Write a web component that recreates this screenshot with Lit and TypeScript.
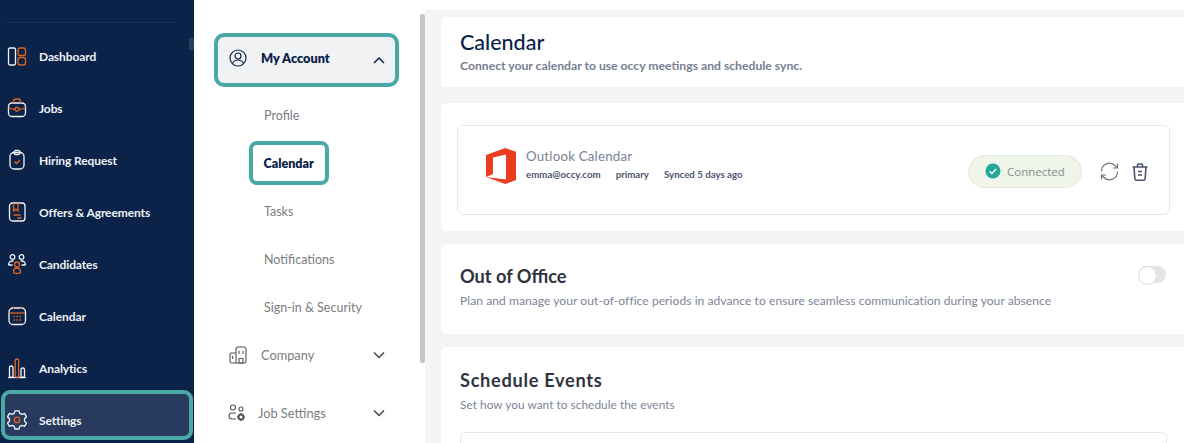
import { LitElement, html, css, svg } from "lit";
import { customElement } from "lit/decorators.js";

const W = "#f2f4f7";
const O = "#e0641e";
const navIcons: Record<string, unknown> = {
  Dashboard: svg`<rect x="1.500" y="3" width="7" height="17" rx="1.500" stroke="${W}"/><rect x="11" y="3" width="7.500" height="7.500" rx="2" stroke="${O}"/><rect x="11" y="12.500" width="7.500" height="7.500" rx="2" stroke="${O}"/>`,
  Jobs: svg`<rect x="1.500" y="6" width="17" height="13.500" rx="3.500" stroke="${W}"/><path d="M6.500 6V4.500a2.500 2.500 0 0 1 2.500-2.500h2a2.500 2.500 0 0 1 2.500 2.500V6" stroke="${O}"/><path d="M1.500 10.500c3 1.500 5 2 6.500 2M18.500 10.500c-3 1.500-5 2-6.500 2" stroke="${O}"/><rect x="8" y="10.500" width="4" height="3.500" rx="1.500" stroke="${O}"/>`,
  "Hiring Request": svg`<rect x="3" y="3.500" width="14" height="16.500" rx="4" stroke="${W}"/><path d="M7 3.500c0-1.500 1-2 2-2h2c1 0 2 .5 2 2s-1 2-2 2H9c-1 0-2-.5-2-2z" stroke="${W}"/><path d="M7.500 12.500l2 2 3.500-3.500" stroke="${O}"/>`,
  "Offers & Agreements": svg`<rect x="2.500" y="2" width="15.500" height="18" rx="3" stroke="${W}"/><path d="M6.500 2v8l2.200-1.800L11 10V2M6.500 14h7M10 17h4.500" stroke="${O}"/>`,
  Candidates: svg`<circle cx="5.500" cy="4" r="2.300" stroke="${W}"/><circle cx="14.500" cy="4" r="2.300" stroke="${W}"/><path d="M1.500 12c0-2 1.500-4 4-4h1M18.500 12c0-2-1.500-4-4-4h-1M1.500 12h4M18.500 12h-4" stroke="${W}"/><circle cx="10" cy="11.500" r="2.500" stroke="${O}"/><path d="M6.500 19c0-2.500 1.500-4 3.500-4s3.500 1.500 3.500 4c0 1-1 1.500-3.500 1.500S6.500 20 6.500 19z" stroke="${O}"/>`,
  Calendar: svg`<rect x="2" y="3" width="16.500" height="16.500" rx="4" stroke="${W}"/><path d="M2.500 8h15.500" stroke="${O}"/><path d="M6.500 1.500v2.500M14 1.500v2.500" stroke="${O}"/><path d="M6.500 11.500h1.500M9.500 11.500h1.500M12.500 11.500h1.500M6.500 15h1.500M9.500 15h1.500M12.500 15h1.500" stroke="${O}"/>`,
  Analytics: svg`<path d="M1 20.500h18" stroke="${W}"/><rect x="2.500" y="9" width="3.500" height="11.500" rx="1.700" stroke="${W}"/><rect x="8.200" y="2" width="3.500" height="18.500" rx="1.700" stroke="${O}"/><rect x="14" y="11" width="3.500" height="9.500" rx="1.700" stroke="${W}"/>`,
  Settings: svg`<path d="M8 1.800h4l.8 2.600 2.200 1 2.500-1 2 3.400-2 1.900v2.400l2 1.900-2 3.400-2.500-1-2.200 1-.8 2.600H8l-.8-2.600-2.200-1-2.500 1-2-3.400 2-1.900V9.700l-2-1.900 2-3.400 2.500 1 2.200-1z" stroke="${W}" stroke-linejoin="round"/><circle cx="10" cy="10.900" r="2.700" stroke="${O}"/>`,
};

@customElement("app-root")
export class AppRoot extends LitElement {
  static styles = css`
    :host {
      display: block;
      width: 1184px;
      height: 443px;
      overflow: hidden;
      font-family: "Lato", "Liberation Sans", sans-serif;
      position: relative;
    }
    * { box-sizing: border-box; }
    .page { display: flex; height: 443px; background: #fff; }

    .side { width: 194px; flex: none; background: #0c2349; padding-top: 22px; position: relative; }
    .rule { height: 1px; width: 168px; margin: 0 0 7px 7px; background: #17305a; }
    .nav { display: flex; flex-direction: column; }
    .nav-item { height: 52px; flex: none; display: flex; align-items: center; gap: 12px; padding-left: 7px; color: #eef1f5; font-size: 12px; font-weight: 700; letter-spacing: -0.1px; }
    .nav-item svg { width: 20px; height: 22px; flex: none; fill: none; stroke-width: 1.300; }
    .nav-item.on { position: relative; }
    .nav-item.on::before { content: ""; position: absolute; left: 1px; top: -4px; right: 1px; bottom: 6px; border: 4.500px solid #4aa8a6; border-radius: 9px; background: #283b5e; z-index: 0; }
    .nav-item.on > * { position: relative; z-index: 1; }
    .grip { position: absolute; left: 189px; top: 38px; width: 5px; height: 12px; background: #2a3c5c; }

    .menu { width: 231px; flex: none; background: #fff; padding: 33px 0 0 20px; position: relative; }
    .account { width: 185px; height: 54px; border: 4.500px solid #4aa8a6; border-radius: 10px; background: #f1f2f4; display: flex; align-items: center; padding: 0 10px 0 11px; color: #0c2349; font-weight: 800; font-size: 12.700px; }
    .account svg.u { width: 18px; height: 18px; margin: 0 14px 4px 0; fill: none; stroke: #0c2349; stroke-width: 1.200; }
    .account span { margin-bottom: 4px; }
    .chev { margin-left: auto; width: 12px; height: 8px; fill: none; stroke-width: 1.500; }
    .subs { display: flex; flex-direction: column; margin-top: 4px; }
    .sub { height: 48px; display: flex; align-items: center; padding-left: 50px; font-size: 12.500px; color: #7c7c7c; }
    .sub.on span { border: 4.500px solid #4aa8a6; border-radius: 8px; height: 44px; width: 80px; margin-left: -15px; padding-left: 10.500px; display: flex; align-items: center; color: #0c2349; font-weight: 800; }
    .group { display: flex; align-items: center; color: #7c7c7c; font-size: 12.800px; width: 185px; padding: 0 14px 0 15px; }
    .group.co { height: 48px; }
    .group.job { height: 58px; margin-top: 5px; padding-left: 14px; }
    .group svg.i { width: 18px; height: 18px; fill: none; stroke: #555; stroke-width: 1.100; flex: none; }
    .group .t { margin-left: 14px; }
    .group.job .t { margin-left: 12px; }
    .bar { position: absolute; left: 226px; top: 14px; width: 5px; height: 349px; background: #c6c6c6; border-radius: 2px; }

    .main { flex: 1; min-width: 0; background: #f4f4f4; margin-top: 10px; padding: 7px 0 0 16px; display: flex; flex-direction: column; gap: 16px; }
    .card { background: #fff; border-radius: 6px 0 0 6px; flex: none; }
    .head { height: 70px; padding: 13px 0 0 19px; border-radius: 6px 0 0 0; }
    .head h1 { margin: 0; font-size: 21.500px; line-height: 24px; font-weight: 500; color: #0c2349; }
    .head p { margin: 4px 0 0; font-size: 12.200px; line-height: 15px; font-weight: 700; color: #767d92; }
    .conn { height: 128px; padding: 22px 14px 0 16px; margin-bottom: -3px; }
    .box { height: 90px; border: 1px solid #e8e8e8; border-radius: 6px; display: flex; align-items: center; padding: 0 21px 0 28px; }
    .logo { width: 30px; height: 36px; flex: none; margin: 0 10px 8px 0; }
    .info { padding-bottom: 12px; }
    .name { font-size: 13.300px; line-height: 17px; color: #7b8197; letter-spacing: .2px; }
    .meta { display: flex; gap: 15px; margin-top: 3px; font-size: 9.700px; line-height: 13px; font-weight: 700; color: #4e566f; }
    .pill { margin-left: auto; width: 114px; height: 33px; border: 1px solid #e2ebd3; border-radius: 17px; background: #eff5e8; display: flex; align-items: center; padding-left: 16px; gap: 6px; font-family: "Open Sans", sans-serif; font-size: 11.500px; color: #8a8a8a; margin-top: 2px; }
    .pill svg { width: 16px; height: 16px; }
    .acts { display: flex; gap: 13px; margin-left: 18px; align-items: center; margin-top: 3px; }
    .acts svg { fill: none; display: block; }
    .ooo { height: 90px; padding: 21px 18px 0 19px; position: relative; }
    .sec { margin: 0; font-size: 18.200px; line-height: 22px; font-weight: 700; color: #2f3340; }
    .desc { margin: 6px 0 0; font-size: 12.050px; line-height: 16px; color: #7d8397; letter-spacing: .06px; }
    .toggle { position: absolute; left: 697px; top: 22px; width: 28px; height: 17px; border-radius: 9px; background: #e4e5e7; }
    .toggle::before { content: ""; position: absolute; left: 0; top: 0; width: 17px; height: 17px; border-radius: 50%; background: #fff; border: 1px solid #dcdcdc; }
    .sched { height: 120px; padding: 22px 17px 0 19px; margin-top: -3px; border-bottom-left-radius: 0; }
    .sched .sec { letter-spacing: .7px; }
    .sched .desc { margin-top: 6px; font-size: 11.800px; }
    .field { margin-top: 19px; height: 40px; border: 1px solid #e8e8e8; border-radius: 6px; }
  `;

  private chev(up: boolean, color: string) {
    return html`<svg class="chev" viewBox="0 0 12 8" style="stroke:${color}"><path d="${up ? "M1 7l5-5 5 5" : "M1 1.500l5 5 5-5"}"/></svg>`;
  }

  render() {
    const nav = ["Dashboard", "Jobs", "Hiring Request", "Offers & Agreements", "Candidates", "Calendar", "Analytics", "Settings"];
    return html`
      <div class="page">
        <aside class="side">
          <div class="rule"></div>
          <div class="grip"></div>
          <nav class="nav">
            ${nav.map((n) => html`<div class="nav-item ${n === "Settings" ? "on" : ""}">
              <svg viewBox="0 0 20 22">${navIcons[n]}</svg><span>${n}</span>
            </div>`)}
          </nav>
        </aside>

        <section class="menu">
          <div class="account">
            <svg class="u" viewBox="0 0 18 18"><circle cx="9" cy="9" r="8"/><circle cx="9" cy="7" r="3"/><path d="M3.500 14.500c1-2.500 3-3.500 5.500-3.500s4.500 1 5.500 3.500"/></svg>
            <span>My Account</span>
            ${this.chev(true, "#0c2349")}
          </div>
          <div class="subs">
            <div class="sub"><span>Profile</span></div>
            <div class="sub on"><span>Calendar</span></div>
            <div class="sub"><span>Tasks</span></div>
            <div class="sub"><span>Notifications</span></div>
            <div class="sub"><span>Sign-in &amp; Security</span></div>
          </div>
          <div class="group co">
            <svg class="i" viewBox="0 0 18 18"><path d="M7 17H2.500A1.500 1.500 0 0 1 1 15.500V8.500A1.500 1.500 0 0 1 2.500 7H7M7 17V3a2 2 0 0 1 2-2h6a2 2 0 0 1 2 2v12.500a1.500 1.500 0 0 1-1.500 1.500H7z"/><path d="M3.500 10v3M10 5v3M14 5v3M10 12.500h4V17h-4z"/></svg>
            <span class="t">Company</span>${this.chev(false, "#444")}
          </div>
          <div class="group job">
            <svg class="i" viewBox="0 0 18 18"><circle cx="5" cy="3.500" r="2.500"/><circle cx="13" cy="5" r="2"/><path d="M8 9H4a3 3 0 0 0 0 6h4"/><circle cx="13" cy="13" r="2.500" stroke-width="2"/><path d="M13 9v1.500M13 15.500V17M9 13h1.500M15.500 13H17" stroke-width="1.500"/></svg>
            <span class="t">Job Settings</span>${this.chev(false, "#444")}
          </div>
          <div class="bar"></div>
        </section>

        <main class="main">
          <div class="card head">
            <h1>Calendar</h1>
            <p>Connect your calendar to use occy meetings and schedule sync.</p>
          </div>
          <div class="card conn">
            <div class="box">
              <svg class="logo" viewBox="0 0 30 36">
                <path fill="#eb3c1f" fill-rule="evenodd" d="M0 7L19.300 0L30 3.700V32L19.300 36L0 29ZM7 9.500L20 6.500V31.500L0 29L7 26Z"/>
              </svg>
              <div class="info">
                <div class="name">Outlook Calendar</div>
                <div class="meta"><span>emma@occy.com</span><span>primary</span><span>Synced 5 days ago</span></div>
              </div>
              <div class="pill">
                <svg viewBox="0 0 16 16"><circle cx="8" cy="8" r="7.500" fill="#26a69a"/><path d="M4.500 8.300l2.400 2.200 4.300-4.500" fill="none" stroke="#fff" stroke-width="1.300"/></svg>
                <span>Connected</span>
              </div>
              <div class="acts">
                <svg width="19" height="19" viewBox="0 0 19 19" stroke="#777" stroke-width="1.200"><path d="M1.500 9.500A8 8 0 0 1 15.500 4l2 2M17.500 1.500V6H13M17.500 9.500A8 8 0 0 1 3.500 15l-2-2M1.500 17.500V13H6"/></svg>
                <svg width="16" height="18" viewBox="0 0 16 18" stroke="#4b5270" stroke-width="1.600"><path d="M.5 4h15M5.500 4V2a1 1 0 0 1 1-1h3a1 1 0 0 1 1 1v2M2 4l.8 11.500a2 2 0 0 0 2 1.800h6.400a2 2 0 0 0 2-1.800L14 4M6 8.500h4M6 12h4"/></svg>
              </div>
            </div>
          </div>
          <div class="card ooo">
            <h2 class="sec">Out of Office</h2>
            <p class="desc">Plan and manage your out-of-office periods in advance to ensure seamless communication during your absence</p>
            <div class="toggle"></div>
          </div>
          <div class="card sched">
            <h2 class="sec">Schedule Events</h2>
            <p class="desc">Set how you want to schedule the events</p>
            <div class="field"></div>
          </div>
        </main>
      </div>
    `;
  }
}
